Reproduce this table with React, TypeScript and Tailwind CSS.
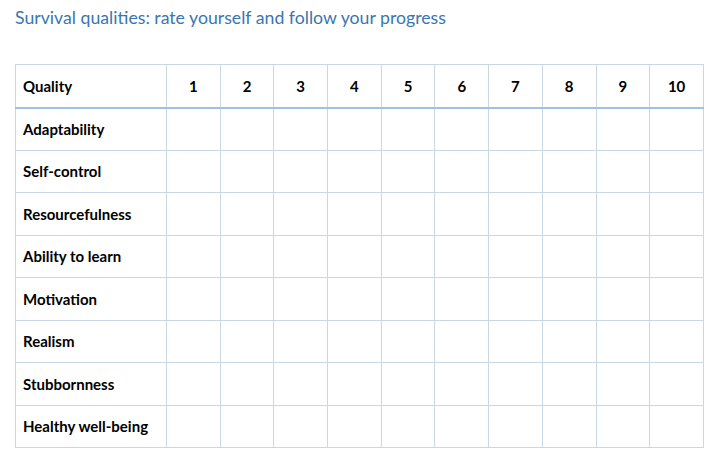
const qualities = [
  'Adaptability',
  'Self-control',
  'Resourcefulness',
  'Ability to learn',
  'Motivation',
  'Realism',
  'Stubbornness',
  'Healthy well-being',
];

const scores = [1, 2, 3, 4, 5, 6, 7, 8, 9, 10];

export default function App() {
  return (
    <div className="w-[718px] h-[464px] bg-white font-['Lato',sans-serif] text-black">
      <h1 className="pl-[15px] pt-[6px] text-[17.7px] leading-[24px] text-[#3a76b0] font-normal">
        Survival qualities: rate yourself and follow your progress
      </h1>
      <table className="ml-[15px] mt-[34px] w-[689px] table-fixed border-collapse">
        <colgroup>
          <col className="w-[151px]" />
          {scores.map((s) => (
            <col key={s} />
          ))}
        </colgroup>
        <thead>
          <tr className="h-[43px]">
            <th className="border border-[#c9d6e4] border-b-2 border-b-[#9fc2e4] pl-[7px] text-left text-[15px] font-bold">
              Quality
            </th>
            {scores.map((s) => (
              <th
                key={s}
                className="border border-[#c9d6e4] border-b-2 border-b-[#9fc2e4] text-center text-[15px] font-bold"
              >
                {s}
              </th>
            ))}
          </tr>
        </thead>
        <tbody>
          {qualities.map((q) => (
            <tr key={q} className="h-[42.5px]">
              <td className="border border-[#c9d6e4] pl-[7px] text-[15px] font-bold">{q}</td>
              {scores.map((s) => (
                <td key={s} className="border border-[#c9d6e4]" />
              ))}
            </tr>
          ))}
        </tbody>
      </table>
    </div>
  );
}
